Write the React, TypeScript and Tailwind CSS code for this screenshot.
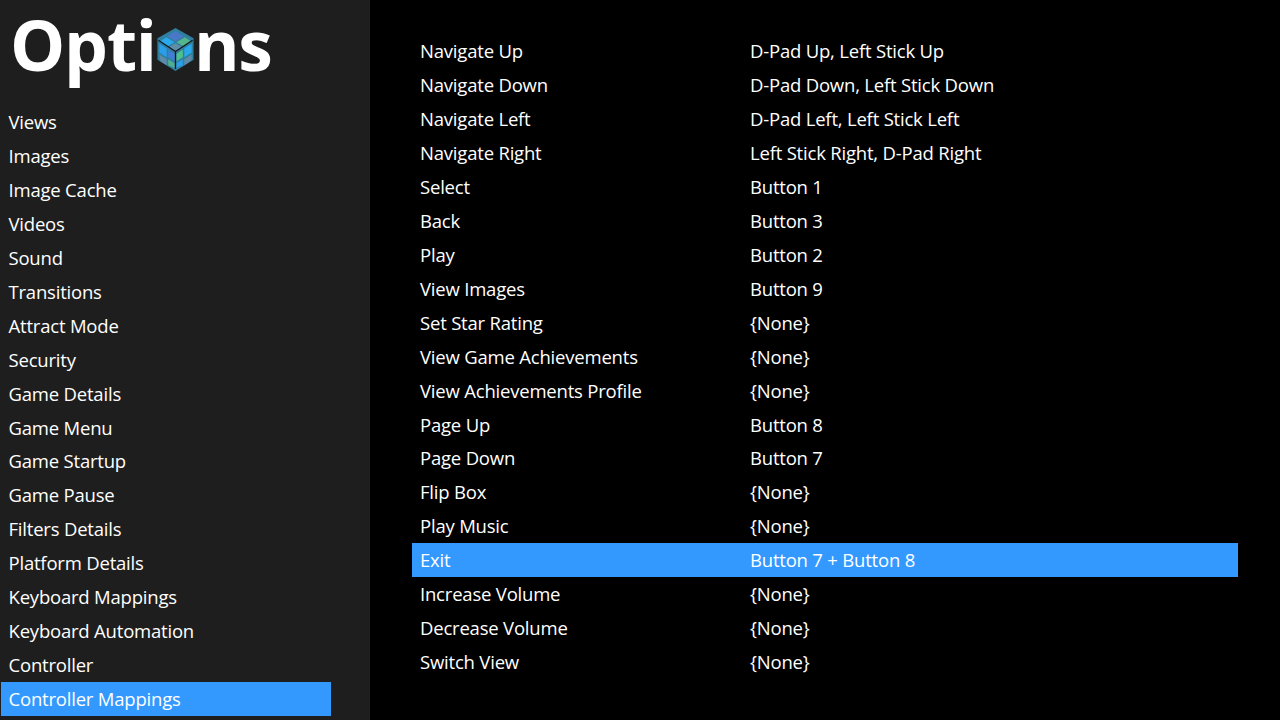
import React from 'react';

const menuItems = [
  'Views', 'Images', 'Image Cache', 'Videos', 'Sound', 'Transitions', 'Attract Mode', 'Security',
  'Game Details', 'Game Menu', 'Game Startup', 'Game Pause', 'Filters Details', 'Platform Details',
  'Keyboard Mappings', 'Keyboard Automation', 'Controller', 'Controller Mappings',
];

const mappings: [string, string][] = [
  ['Navigate Up', 'D-Pad Up, Left Stick Up'],
  ['Navigate Down', 'D-Pad Down, Left Stick Down'],
  ['Navigate Left', 'D-Pad Left, Left Stick Left'],
  ['Navigate Right', 'Left Stick Right, D-Pad Right'],
  ['Select', 'Button 1'],
  ['Back', 'Button 3'],
  ['Play', 'Button 2'],
  ['View Images', 'Button 9'],
  ['Set Star Rating', '{None}'],
  ['View Game Achievements', '{None}'],
  ['View Achievements Profile', '{None}'],
  ['Page Up', 'Button 8'],
  ['Page Down', 'Button 7'],
  ['Flip Box', '{None}'],
  ['Play Music', '{None}'],
  ['Exit', 'Button 7 + Button 8'],
  ['Increase Volume', '{None}'],
  ['Decrease Volume', '{None}'],
  ['Switch View', '{None}'],
];

function CubeLogo() {
  return (
    <svg width="37" height="43" viewBox="0 0 37 44" className="shrink-0">
      <polygon points="18.5,0 37,10.5 37,32.5 18.5,44 0,32.5 0,10.5" fill="#2f7f9f" />
      {/* top face */}
      <polygon points="18.5,3 27,8.5 18.5,13.5 10,8.5" fill="#4a78c8" />
      <polygon points="9,9.5 17.5,14.5 10,19 2,14" fill="#2aa8ec" />
      <polygon points="28,9.5 35,14 27,19 19.5,14.5" fill="#55b58c" />
      <polygon points="18.5,15.5 26,20 18.5,25 11,20" fill="#5f8fa8" />
      {/* left face */}
      <polygon points="2,16 9.5,21 9.5,30 2,25" fill="#2a9ee8" />
      <polygon points="11,22 17.5,26.5 17.5,34 11,30" fill="#3f7fd8" />
      <polygon points="2,27 9.5,32 9.5,38 3,34" fill="#5f8aa8" />
      <polygon points="11,32 17.5,36 17.5,41 11,38" fill="#4fae8c" />
      {/* right face */}
      <polygon points="19.5,26.5 26,22 26,30 19.5,34" fill="#4fc08c" />
      <polygon points="27.5,21 35,16 35,25 27.5,30" fill="#2aa8ec" />
      <polygon points="19.5,36 26,32 26,38 19.5,41" fill="#2a9ee8" />
      <polygon points="27.5,32 35,27 35,33 27.5,38" fill="#5f8aa8" />
      {/* black cube edges */}
      <path d="M1 12.5 L18.5 24 L36 12.5 M18.5 24 V42" stroke="#10151c" strokeWidth="1.2" fill="none" />
    </svg>
  );
}

export default function App() {
  return (
    <div className="flex h-[720px] w-[1280px] overflow-hidden bg-black text-white font-['Open_Sans','Noto_Sans',sans-serif] text-[18.5px] font-[450] tracking-[-0.2px]">
      {/* Sidebar */}
      <div className="flex w-[370px] shrink-0 flex-col bg-[#1e1e1e]">
        <div className="flex h-[105px] items-start pl-[10px] text-[69.5px] font-bold leading-[88px] tracking-[-1.2px]">
          <span>Opti</span>
          <div className="ml-[1px] mt-[28px]">
            <CubeLogo />
          </div>
          <span>ns</span>
        </div>
        <div className="flex flex-col pl-px">
          {menuItems.map((item) => (
            <div
              key={item}
              className={`flex h-[33.94px] w-[330px] items-center pl-[7.5px] ${item === 'Controller Mappings' ? 'bg-[#3399ff]' : ''}`}
            >
              {item}
            </div>
          ))}
        </div>
      </div>

      {/* Mapping list */}
      <div className="flex flex-1 flex-col pl-[42px] pt-[34.12px]">
        {mappings.map(([action, binding]) => (
          <div
            key={action}
            className={`flex h-[33.94px] w-[826px] items-center pl-2 ${action === 'Exit' ? 'bg-[#3399ff]' : ''}`}
          >
            <div className="w-[330px] shrink-0">{action}</div>
            <div>{binding}</div>
          </div>
        ))}
      </div>
    </div>
  );
}
